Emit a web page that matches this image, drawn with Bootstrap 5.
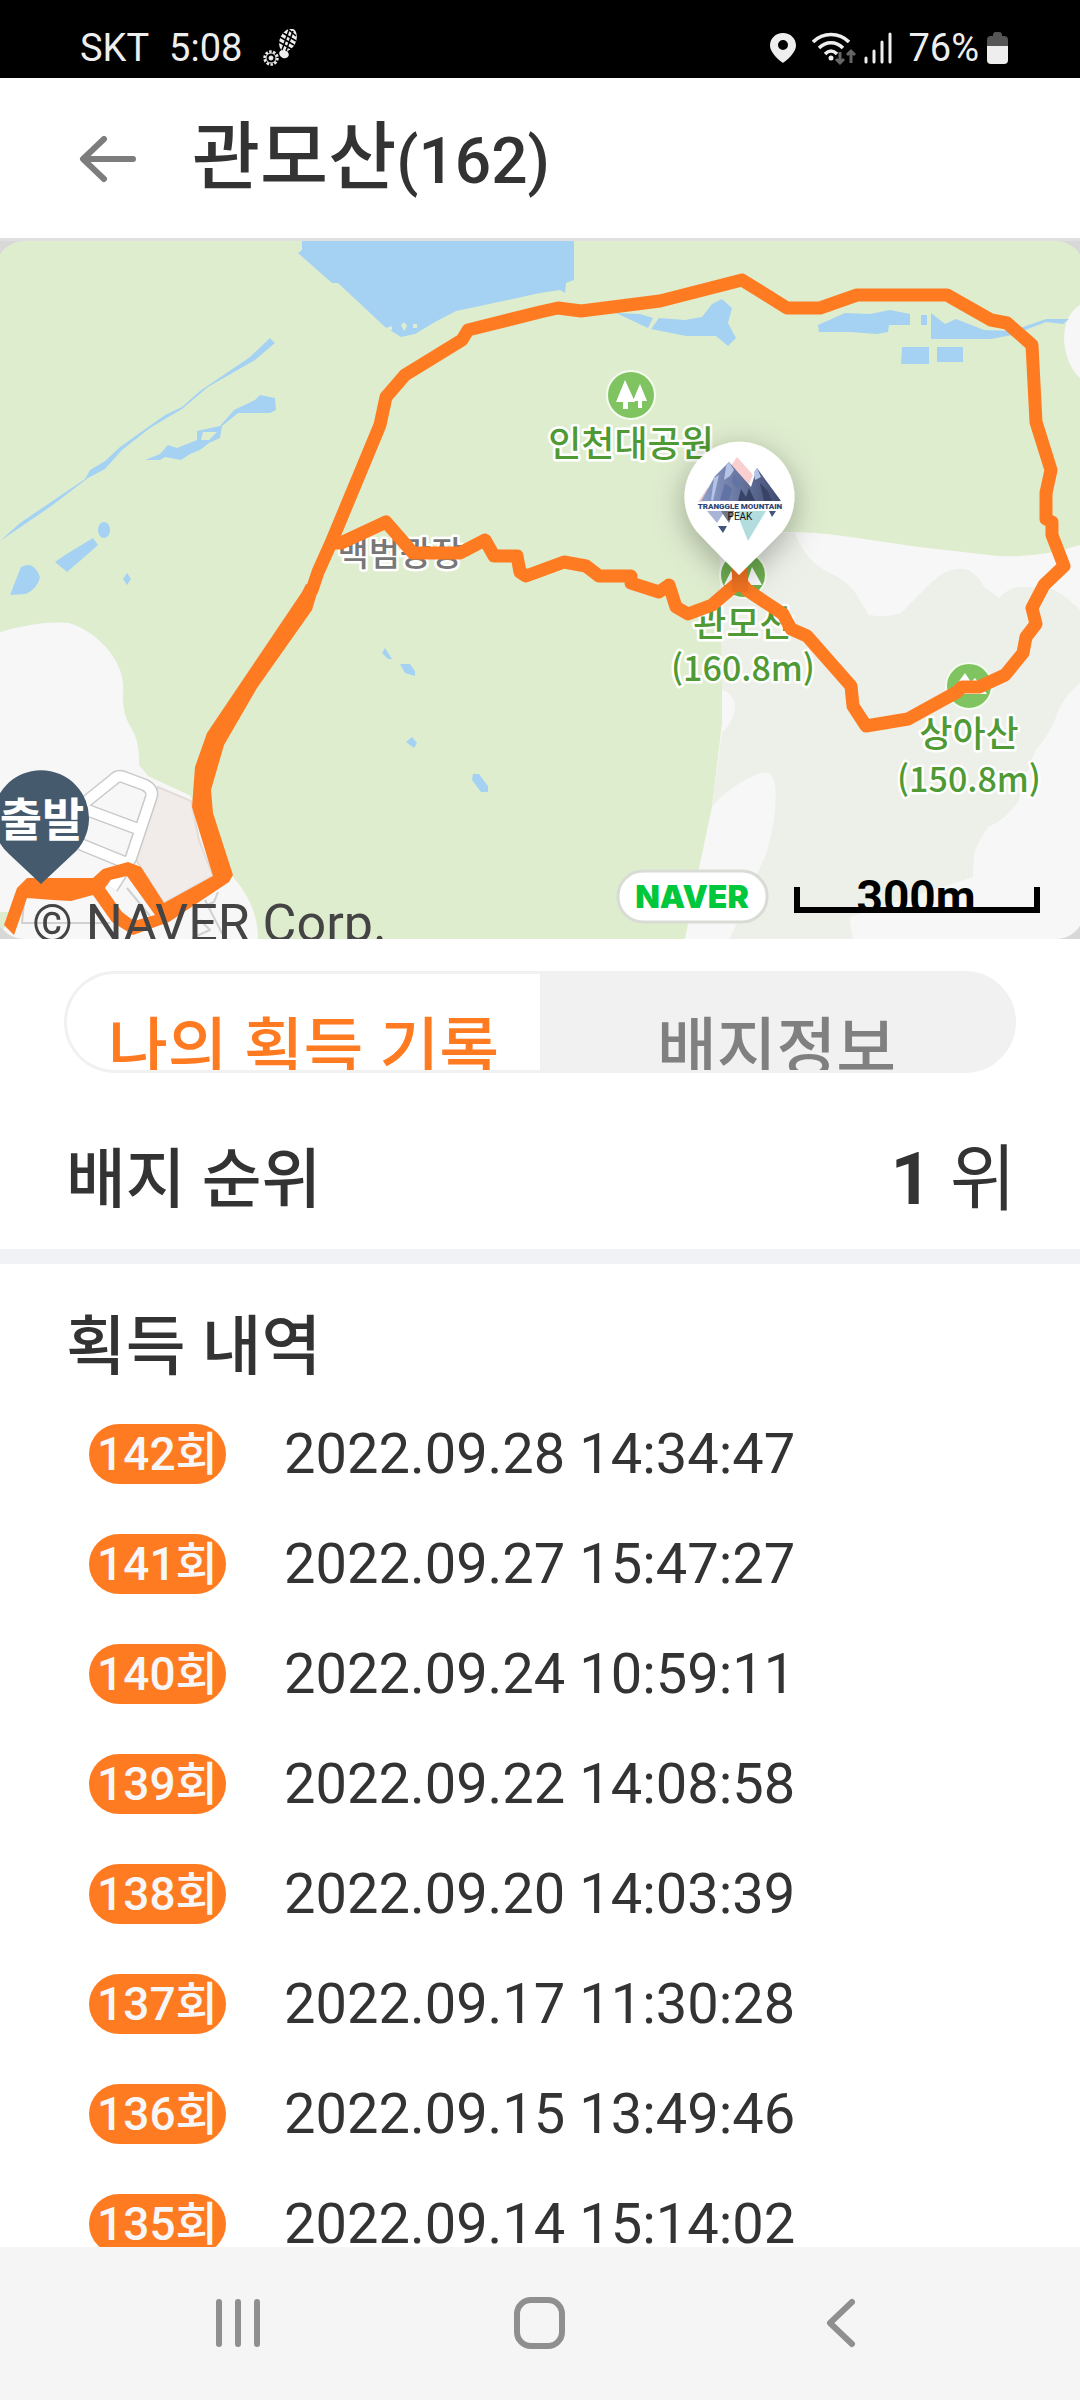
<!DOCTYPE html>
<html lang="ko">
<head>
<meta charset="utf-8">
<meta name="viewport" content="width=device-width, initial-scale=1">
<title>관모산(162)</title>
<link href="https://cdn.jsdelivr.net/npm/bootstrap@5.3.0/dist/css/bootstrap.min.css" rel="stylesheet">
<style>
:root{--ink:#333;--accent:#ff7b22}
body{font-family:Roboto,"Noto Sans CJK KR",sans-serif;color:var(--ink);background:#fff}
.status-bar{height:80px;margin-bottom:-2px;padding:0 72px 0 80px;background:#000;color:#eee;font-size:38px;line-height:64px;align-items:end}
.status-bar svg{display:block}
.carrier{gap:20px}
.app-bar{height:160px;padding:4px 76px 0;gap:54px;background:#fff}
.app-title{font-size:74px;line-height:96px;font-weight:500}
.app-title span{font-size:64px}
.map-view{border-top:3px solid #e0e0e0;background:#d8d8d8}
.map-view svg{width:100%;height:auto}
.map-label{font-family:"Noto Sans CJK KR",sans-serif;font-weight:500;text-anchor:middle;fill:#4f9a34;stroke:#fff;stroke-width:5px;stroke-linejoin:round;paint-order:stroke}
.map-label.plaza{fill:#777}
.gutter{padding-left:64px;padding-right:64px}
.seg{height:102px;border:3px solid #f1f1f1;background:#f1f1f1;margin-top:32px}
.seg button{height:96px;overflow:hidden;border:0;padding:33px 0 0;background:#f1f1f1;color:#808080;font-size:65px;line-height:84px;font-weight:500;display:flex;justify-content:center;align-items:start}
.seg button.active{background:#fff;color:var(--accent)}
.section-title{font-size:65px;line-height:96px;font-weight:500;padding-left:2px}
.rank-row{height:176px;padding-top:38px}
.rank-value{font-size:72px;line-height:96px}
.divider{height:15px;background:#f0f2f5}
.history-title{padding-top:35px;padding-bottom:4px}
.log-row{height:110px;padding-left:25px;gap:58px}
.count-pill{width:137px;height:60px;background:var(--accent);color:#f7f7f7;font-size:46px;line-height:60px;font-weight:500}
.log-row time{font-size:56px;line-height:80px}
.nav-keys{height:153px;background:#f5f5f5;padding:0 8%}
</style>
<script src="https://cdn.jsdelivr.net/npm/bootstrap@5.3.0/dist/js/bootstrap.bundle.min.js"></script>
</head>
<body class="vh-100 d-flex flex-column overflow-hidden">

<div class="status-bar d-flex justify-content-between flex-shrink-0">
  <div class="carrier d-flex align-items-center">
    <span>SKT</span><span>5:08</span>
    <svg width="38" height="38" viewBox="0 0 38 38" fill="none" stroke="#eee">
      <ellipse cx="26" cy="11" rx="8" ry="12" transform="rotate(25 26 11)" fill="#eee" stroke="none"/>
      <ellipse cx="22" cy="25" rx="5" ry="4" transform="rotate(25 22 25)" fill="#eee" stroke="none"/>
      <path d="M17 13l14 8M18 8l14 8M21 4l13 8M26 0l8 7M27 1l-7 20M31 2l-7 20" stroke="#000" stroke-width="1.500"/>
      <circle cx="9" cy="29" r="6.500" stroke-width="2.500" stroke-dasharray="2.500 1.500"/><circle cx="9" cy="29" r="5"/><circle cx="9" cy="29" r="2" fill="#eee"/>
    </svg>
  </div>
  <div class="d-flex align-items-center">
    <svg class="me-3" width="26" height="64" viewBox="0 0 26 64"><path fill="#eee" fill-rule="evenodd" d="M13 17C5.500 17 0 22.500 0 29.500 0 38 13 47 13 47s13-9 13-17.500C26 22.500 20.500 17 13 17zm0 7a5 5 0 110 10 5 5 0 010-10z"/></svg>
    <svg width="44" height="64" viewBox="0 0 44 64" fill="none" stroke="#eee" stroke-width="3.500"><path d="M1 26c10-10 26-10 36 0M7 32c7-7 17-7 24 0M13 38c4-4 8-4 12 0"/><circle cx="19" cy="42" r="2.500" fill="#eee" stroke="none"/><path stroke="#666" stroke-width="3" d="M28 36v11m-4-4l4 4 4-4M39 47V35m-4 4l4-4 4 4"/></svg>
    <svg class="ms-2 me-3" width="28" height="64" viewBox="0 0 28 64" stroke="#eee" stroke-width="3" stroke-linecap="round"><path d="M2 42v4M10 35v11M18 26v20M26 18v28"/></svg>
    <span>76%</span>
    <svg class="ms-2" width="21" height="64" viewBox="0 0 21 64"><path fill="#555" d="M6 19q0-3 3-3h3q3 0 3 3v1h2q4 0 4 4v8H0v-8q0-4 4-4h2z"/><path fill="#eee" d="M0 30h21v14q0 4-4 4H4q-4 0-4-4z"/></svg>
  </div>
</div>

<header class="app-bar d-flex align-items-center flex-shrink-0">
  <button class="btn p-0 border-0 d-flex" aria-label="뒤로">
    <svg width="62" height="48" viewBox="0 2 62 48" fill="none" stroke="#7d7d7d" stroke-width="6" stroke-linecap="round" stroke-linejoin="round"><path d="M28 5L7 25l21 20M8 25h49"/></svg>
  </button>
  <h1 class="app-title mb-0">관모산<span>(162)</span></h1>
</header>

<div class="map-view flex-shrink-0">
<svg class="d-block" viewBox="0 241 1080 698" role="img" aria-label="관모산 지도">
  <defs>
    <clipPath id="mapClip"><rect x="-4" y="241" width="1088" height="698" rx="28"/></clipPath>
    <filter id="pinShadow" x="-60%" y="-40%" width="220%" height="200%"><feDropShadow dx="0" dy="8" stdDeviation="16" flood-color="#000" flood-opacity=".3"/></filter>
    <linearGradient id="rock"><stop offset="0" stop-color="#8e9fcb"/><stop offset="1" stop-color="#3f4a70"/></linearGradient>
  </defs>
  <g clip-path="url(#mapClip)">
    <path fill="#dfedcf" d="M-5 241h1090v698H-5z"/>
    <!-- built-up and hill areas -->
    <path fill="#f7f7f7" d="M722 563L760 533Q800 530 843 536L919 547 998 556Q1040 558 1080 545V939H685L698 873 712 807 722 723 722 690z"/>
    <path fill="#edf0e8" d="M719 533H795Q806 562 830 573Q850 582 858 597L869 615Q885 618 901 613L932 582Q950 565 968 570Q978 575 984 587L999 598Q1010 586 1022 587H1046Q1060 590 1080 610V683Q1060 700 1055 720Q1045 740 1036 750Q1025 775 1018 802Q1005 820 988 827 974 848 974 857L973 877 972 900 850 917Q850 925 853 939H729Q742 915 747 897L767 852Q778 810 775 785Q773 770 760 773Q730 785 712 807L722 733Q735 720 735 705Q733 693 722 690z"/>
    <path fill="#f7f7f7" d="M973 877L974 857 1080 750V939H853Q851 925 850 917zM1080 305Q1064 315 1064 340Q1066 365 1080 378zM0 632Q40 620 69 623Q92 630 110 652Q125 672 123 693Q122 712 130 726Q140 740 139 765L148 776 191 796 213 876 233 877Q258 905 258 939H0z"/>
    <path fill="#dfedcf" d="M0 912h14l-12 20H0z"/>
    <path fill="#f1ecea" stroke="#e2ddd8" stroke-width="2" d="M158 787L191 801 199 840 213 876 164 903 134 857z"/>
    <g fill="none" stroke-linejoin="round">
      <path stroke="#c9c9c9" stroke-width="13" d="M78 808L113 780Q118 774 126 778L145 785Q154 790 151 798L131 858 112 888M87 810L138 829M80 844L124 862"/>
      <path stroke="#fff" stroke-width="10" d="M78 808L113 780Q118 774 126 778L145 785Q154 790 151 798L131 858 112 888M87 810L138 829M80 844L124 862"/>
      <path stroke="#d0d0d0" stroke-width="2" d="M24 903L22 923H110M127 888L150 916M165 905L210 884M205 900L228 945M218 892L214 902 207 905M200 920L210 930 192 938"/>
    </g>
    <!-- water -->
    <g fill="#a5d2f2">
      <path d="M302 241V250L298 253 332 283H338L353 297 385 327 401 337 415 334 435 322 456 311 480 306 540 293 560 290 565 293 566 283 574 280V241z"/>
      <path d="M0 541L20 523 85 479 90 470 105 461 120 447 165 415 182 407 200 391 250 357 270 338 275 343 255 360 208 387 182 409 150 428 122 450 105 469 88 478 50 507z"/>
      <path fill-rule="evenodd" d="M145 460L160 454 168 445 177 448 197 440V431L220 426 234 410 255 400 260 395 275 398 276 410 270 413 238 413 222 426 220 438 209 443 200 450 190 454 181 460 165 457 160 460zM203 432L201 440 209 440 217 432z"/>
      <ellipse cx="104" cy="530" rx="6" ry="8"/>
      <path d="M55 562L65 555 93 538 98 545 81 560 67 572zM10 595L21 567Q34 560 40 577Q38 588 26 594zM127 573l4 6-4 6-4-6zM385 648l7 11-4 0-6-6zM400 664h10l5 7v5l-10-3zM406 742l6-5 5 6-3 5zM473 774l6 0 9 12v6h-7l-9-12z"/>
      <path d="M616 313L640 314 653 318 648 328zM659 318L685 320 702 317 712 304 722 299 732 308 728 323 736 338 728 346 716 336H686L651 329zM818 325L845 313 870 314 890 310 910 314V325H889L888 332 877 334 850 332H819zM921 315h6v10h-6zM931 313L945 324 956 319 984 330 1012 331 1046 319 1069 319 1063 324 1046 322 1012 335 991 339H931zM902 347h27v17h-28zM937 347h26v15h-26z"/>
      <path fill="#dfedcf" d="M386 328l6-2v4h-4zM401 325l3-3 3 4-3 5zM413 324h4v4h-4z"/>
    </g>
    <!-- place labels -->
    <g>
      <circle cx="631" cy="395" r="24" fill="#7fc460" stroke="#f4fbef" stroke-width="2"/>
      <path fill="#fff" d="M625 380l10 22h-7v7h-5v-7h-7zM640 384l7 17h-5v7h-4v-7h-5l4-10z"/>
      <circle cx="743" cy="575" r="23" fill="#6fb050" stroke="#f4fbef" stroke-width="2"/>
      <path fill="#fff" d="M724 585l7-14 7 14zM747 582l5-15 10 18h-15z"/>
      <circle cx="969" cy="686" r="23" fill="#7fc460" stroke="#f4fbef" stroke-width="2"/>
      <path fill="#fff" d="M957 684l8-11 6 9 4-4 12 16h-36z"/>
      <text class="map-label" font-size="36" x="631" y="457">인천대공원</text>
      <text class="map-label plaza" font-size="34" x="400" y="566">백범광장</text>
      <text class="map-label" font-size="36" x="743" y="637">관모산</text>
      <text class="map-label" font-size="34" x="743" y="681">(160.8m)</text>
      <text class="map-label" font-size="36" x="969" y="747">상아산</text>
      <text class="map-label" font-size="34" x="969" y="792">(150.8m)</text>
    </g>
    <!-- hiking track -->
    <path fill="none" stroke="#ff7b22" stroke-width="13" stroke-linejoin="round" stroke-linecap="round" d="M312 590L318 572 331 543 380 425 386 397 405 375 462 340 468 330 540 312 558 308 581 311 660 301 742 280 787 308H820L857 295H947L991 320 1007 323 1032 345 1036 422 1051 470 1046 493V519L1052 522V535L1064 566 1044 585 1032 608 1036 624 1026 637 1023 653 1005 675 979 687H962L957 692 908 719 866 726 853 706 851 686 807 636 791 629 783 614 747 590 740 581 712 605 688 614 676 607 669 585 659 592 631 583V576H599L586 566 564 562 526 576 520 572 517 556H494L485 540 460 553H413L386 522 341 543H331"/>
    <path fill="#ff7b22" fill-rule="evenodd" d="M306 584L302 592 207 733 195 767 192 807 213 876 164 903 141 867 128 862 103 869 93 878H27L17 888 4 925 14 935 27 898 53 900 71 901 93 895 112 922 133 935 169 922 229 882 233 875 213 813 211 790 224 745 257 688 312 610 318 590zM105 888L110 880 127 876 155 915 134 921 122 912z"/>
    <path fill="#f37421" d="M732 568h16v24h-16z"/>
    <!-- attribution and scale -->
    <text x="32" y="941" font-size="52" fill="#444">© NAVER Corp.</text>
    <rect x="618" y="871" width="149" height="51" rx="25" fill="#fff" stroke="#d9dcd5" stroke-width="3"/>
    <text x="692" y="908" text-anchor="middle" font-family="Inter, sans-serif" font-weight="900" font-size="32" fill="#00c73c">NAVER</text>
    <path fill="none" stroke="#000" stroke-width="6" d="M797 887V910H1037V887"/>
    <text x="916" y="913" text-anchor="middle" font-weight="700" font-size="46">300m</text>
    <!-- start pin -->
    <path fill="#455a6d" d="M41 884L9 854A48 48 0 1 1 73 854z"/>
    <text x="42" y="836" text-anchor="middle" font-family="Noto Sans CJK KR, sans-serif" font-weight="700" font-size="46" fill="#fff">출발</text>
    <!-- summit pin -->
    <path fill="#fff" filter="url(#pinShadow)" d="M739 575L701 536A55 55 0 1 1 778 536z"/>
    <path fill="#f9cfcf" d="M728 470L737 457 753 475 748 486zM698 502l10-15 2 14z"/>
    <path fill="#fff" d="M730 468l20 22 4 9-12-8z"/>
    <path fill="url(#rock)" d="M701 501L715 476 729 462 751 487 757 468 781 501z"/>
    <path fill="#b5c3e6" d="M711 500l3-22 5-3-6 26zM726 466l3-4 5 8-4 6-6 4zM754 472l3-4 4 9-6 3z"/>
    <path fill="#394367" d="M738 501l3-12 5 8 3-9 6 13zM764 501l-4-18 8 8 4 10z"/>
    <path fill="#6274a5" d="M720 500l5-17 7 6-3 11zM732 482l2-8 7 10-5 4z"/>
    <path fill="#a8b5d7" d="M707 511h18l-8 12z"/><path fill="#707783" d="M721 511h13l-5 12z"/>
    <path fill="#b3dcdf" d="M736 511h30l-18 30z"/><path fill="#44557a" d="M769 511h7l-4 6zM718 526h9l-4 7z"/>
    <text x="740" y="509" text-anchor="middle" font-weight="900" font-size="8" fill="#2f4470">TRANGGLE MOUNTAIN</text>
    <text x="740" y="520" text-anchor="middle" font-size="10" fill="#111">PEAK</text>
  </g>
</svg>
</div>

<main class="flex-grow-1 overflow-hidden">
  <div class="gutter">
    <div class="seg d-flex rounded-pill overflow-hidden" role="tablist">
      <button type="button" class="active w-50" role="tab" aria-selected="true">나의 획득 기록</button>
      <button type="button" class="w-50" role="tab" aria-selected="false">배지정보</button>
    </div>
    <div class="rank-row d-flex align-items-center justify-content-between">
      <h2 class="section-title mb-0">배지 순위</h2>
      <div class="rank-value"><strong>1</strong> 위</div>
    </div>
  </div>
  <div class="divider"></div>
  <section class="gutter">
    <h2 class="section-title history-title mb-0">획득 내역</h2>
    <ul class="list-unstyled mb-0">
      <li class="log-row d-flex align-items-center"><span class="count-pill rounded-pill text-center text-nowrap">142회</span><time>2022.09.28 14:34:47</time></li>
      <li class="log-row d-flex align-items-center"><span class="count-pill rounded-pill text-center text-nowrap">141회</span><time>2022.09.27 15:47:27</time></li>
      <li class="log-row d-flex align-items-center"><span class="count-pill rounded-pill text-center text-nowrap">140회</span><time>2022.09.24 10:59:11</time></li>
      <li class="log-row d-flex align-items-center"><span class="count-pill rounded-pill text-center text-nowrap">139회</span><time>2022.09.22 14:08:58</time></li>
      <li class="log-row d-flex align-items-center"><span class="count-pill rounded-pill text-center text-nowrap">138회</span><time>2022.09.20 14:03:39</time></li>
      <li class="log-row d-flex align-items-center"><span class="count-pill rounded-pill text-center text-nowrap">137회</span><time>2022.09.17 11:30:28</time></li>
      <li class="log-row d-flex align-items-center"><span class="count-pill rounded-pill text-center text-nowrap">136회</span><time>2022.09.15 13:49:46</time></li>
      <li class="log-row d-flex align-items-center"><span class="count-pill rounded-pill text-center text-nowrap">135회</span><time>2022.09.14 15:14:02</time></li>
    </ul>
  </section>
</main>

<nav class="nav-keys d-flex justify-content-around align-items-center flex-shrink-0">
  <button class="btn p-0 border-0 d-flex" aria-label="최근 앱"><svg width="56" height="56" viewBox="-3 1 56 56" stroke="#8f8f8f" stroke-width="6" stroke-linecap="round"><path d="M6 7v42M25 7v42M44 7v42"/></svg></button>
  <button class="btn p-0 border-0 d-flex" aria-label="홈"><svg width="56" height="56" viewBox="0 0 56 56" fill="none" stroke="#8f8f8f" stroke-width="6"><rect x="5" y="4" width="45" height="46" rx="14"/></svg></button>
  <button class="btn p-0 border-0 d-flex" aria-label="뒤로 가기"><svg width="56" height="56" viewBox="-3 1 56 56" fill="none" stroke="#8f8f8f" stroke-width="6" stroke-linecap="round" stroke-linejoin="round"><path d="M35 7L13 28l22 21"/></svg></button>
</nav>
</body>
</html>
